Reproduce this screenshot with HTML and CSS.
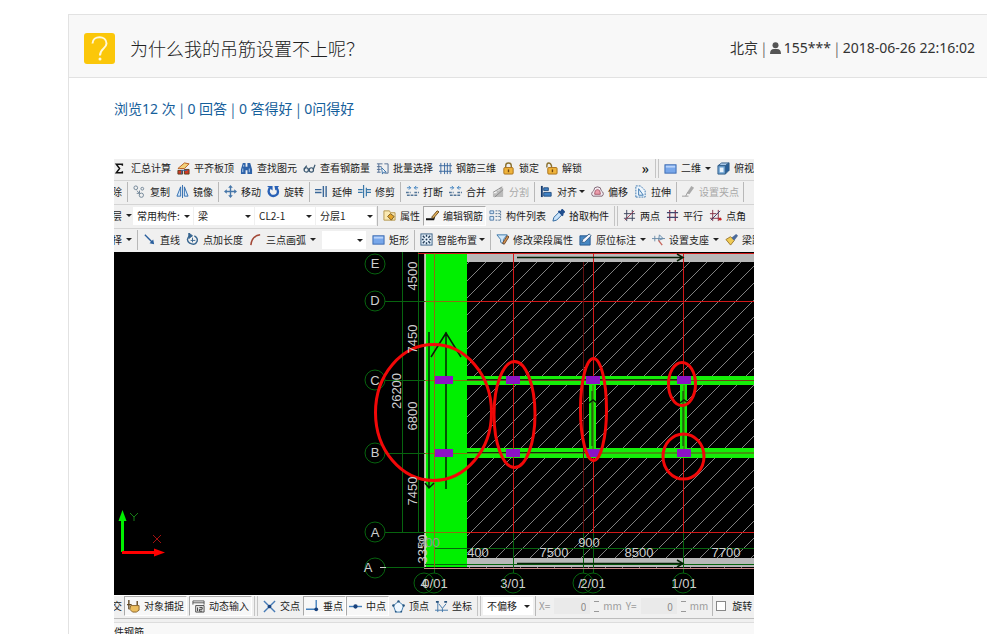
FILE: index.html
```html
<!DOCTYPE html>
<html lang="zh-CN">
<head>
<meta charset="utf-8">
<title>为什么我的吊筋设置不上呢？</title>
<link rel="stylesheet" href="styles.css">
</head>
<body>
<svg class="sprite" aria-hidden="true">
  <symbol id="sum" viewBox="0 0 14 14"><path d="M9 4V2.500H2.500L6 7l-3.500 4.500H9V10" fill="none" stroke="#111" stroke-width="1.600"/></symbol>
  <symbol id="slab" viewBox="0 0 14 14"><path d="M1 7l7-6 5 1-5 5H3z" fill="#f3d27a" stroke="#b55b1c"/><path d="M1 9h5v4H1zM8 8h5v5H8z" fill="#d33a26" stroke="#583c1c"/><path d="M5 13V9h6" fill="none" stroke="#3468a8"/></symbol>
  <symbol id="find" viewBox="0 0 14 14"><path d="M3 1h3v4h2V1h3l2 7v5H8V9H6v4H1V8z" fill="#2e62a8"/><path d="M3 7v4M10 7v4M4 3v2" stroke="#b5d4f2"/></symbol>
  <symbol id="glasses" viewBox="0 0 14 14"><g fill="none" stroke="#38566f" stroke-width="1.300"><circle cx="3.500" cy="8.500" r="2.300"/><circle cx="9" cy="8.500" r="2.300"/><path d="M1 8l3-4M11 8l2-5"/></g></symbol>
  <symbol id="batch" viewBox="0 0 14 14"><path d="M1 2h6M1 5h5M1 8h4M1 11h4M3 2v9M9 2h4v10H9" fill="none" stroke="#506c91"/><path d="M6 6l5 5-3 0-1 2z" fill="#fff" stroke="#3870a8"/></symbol>
  <symbol id="cage" viewBox="0 0 14 14"><path d="M2 1v12M6 1v12M9 1v12M12 1v12M0 4h14M0 10h14" stroke="#36669e" fill="none"/></symbol>
  <symbol id="lock" viewBox="0 0 14 14"><path d="M4 6V4q0-3 3-3t3 3v2" fill="none" stroke="#8a7130" stroke-width="1.500"/><rect x="2" y="6" width="10" height="7" rx="1" fill="#efb43c" stroke="#a66d17"/><path d="M7 8v3" stroke="#704610" stroke-width="1.500"/></symbol>
  <symbol id="unlock" viewBox="0 0 14 14"><path d="M2 6V4q0-3 2-3t3 3v2" fill="none" stroke="#8a7130" stroke-width="1.500"/><rect x="3" y="6" width="10" height="7" rx="1" fill="#efb43c" stroke="#a66d17"/><path d="M8 8v3" stroke="#704610" stroke-width="1.500"/></symbol>
  <symbol id="rect" viewBox="0 0 14 14"><rect x="1" y="3" width="12" height="9" fill="#78a7ea" stroke="#3a69b0"/><path d="M2 5h10" stroke="#b9d3fa" stroke-width="2"/></symbol>
  <symbol id="cube" viewBox="0 0 14 14"><path d="M1 4l4-3h8L9 4z" fill="#a8c8e8" stroke="#315d87"/><path d="M9 4l4-3v8l-4 4z" fill="#285e98" stroke="#315d87"/><path d="M1 4h8v9H1z" fill="#6fa4d4" stroke="#315d87"/><path d="M3 6h4v5H3z" fill="#eaf3fb"/></symbol>
  <symbol id="copy" viewBox="0 0 14 14"><g fill="none" stroke="#6d8294"><circle cx="3" cy="3" r="2"/><circle cx="10" cy="4" r="1.500"/><circle cx="9" cy="11" r="2.300"/><path d="M4 6l3 3M4 9h3V6"/></g></symbol>
  <symbol id="mirror" viewBox="0 0 14 14"><path d="M5 2v10H1zM9 2v10h4z" fill="#d5e9fb" stroke="#2f6bae"/><path d="M7 0v14" stroke="#2f6bae"/></symbol>
  <symbol id="move" viewBox="0 0 14 14"><path d="M7 2v10M2 7h10" stroke="#4777a9" stroke-width="1.500"/><path d="M7 0l2.500 3h-5zM7 14l2.500-3h-5zM0 7l3-2.500v5zM14 7l-3-2.500v5z" fill="#4777a9"/></symbol>
  <symbol id="rotate" viewBox="0 0 14 14"><path d="M3 3q-3 5 1 8 4 2 7-1 2-4-1-7" fill="none" stroke="#2860b5" stroke-width="2.500"/><path d="M0 1h6v5zM8 1h5l-4 5z" fill="#2860b5"/></symbol>
  <symbol id="extend" viewBox="0 0 14 14"><path d="M0 5h7M0 8h7" stroke="#3a6798" stroke-width="1.500"/><path d="M9 1v12M12 1v12" stroke="#3a6798" stroke-width="1.500"/></symbol>
  <symbol id="trim" viewBox="0 0 14 14"><path d="M0 5h5M0 8h5M9 5h5M9 8h5M6 0v14M9 3v9" stroke="#3978aa" stroke-width="1.300"/></symbol>
  <symbol id="break" viewBox="0 0 14 14"><path d="M0 8h5M9 8h5M1 11h12" stroke="#547698" stroke-width="1.500" stroke-dasharray="3 1"/><path d="M1 3h4M9 3h4M3 1l2 2-2 2M11 1L9 3l2 2" stroke="#397dbd" fill="none"/></symbol>
  <symbol id="split" viewBox="0 0 14 14"><path d="M1 13V9h4V6h3V3h4v10z" fill="#bbb"/><path d="M1 8l10-6M3 13l9-8" stroke="#888"/></symbol>
  <symbol id="align" viewBox="0 0 14 14"><path d="M2 1v12" stroke="#173d70" stroke-width="2"/><path d="M4 3h5v3H4zM4 8h8v4H4z" fill="#3f81c4" stroke="#234e80"/></symbol>
  <symbol id="offset" viewBox="0 0 14 14"><path d="M2 12q-3-3 1-6 0-4 4-4t4 4q4 3 1 6z" fill="#f2eaf0" stroke="#7a6270"/><path d="M4 10q0-5 3-5t3 5z" fill="#ec9bab" stroke="#a35667"/></symbol>
  <symbol id="stretch" viewBox="0 0 14 14"><path d="M2 13V1h5l5 5v7z" fill="#eef6fd" stroke="#3875ae" stroke-dasharray="2 1"/><path d="M5 4v7h5z" fill="none" stroke="#3875ae"/></symbol>
  <symbol id="grip" viewBox="0 0 14 14"><path d="M5 9l5-8 3 2-5 7z" fill="#aaa"/><path d="M0 12h7M6 8l-2 4" stroke="#999"/></symbol>
  <symbol id="props" viewBox="0 0 14 14"><path d="M1 2h6l1 2h5v8H1z" fill="#fae9b2" stroke="#b3944d"/><path d="M5 8l3-3 4 3-3 4z" fill="#e3a52b" stroke="#755721"/></symbol>
  <symbol id="editbar" viewBox="0 0 14 14"><path d="M0 11h8l1-3" fill="none" stroke="#111" stroke-width="2"/><path d="M6 9l6-7 2 1-6 7z" fill="#e4b35b" stroke="#68491e"/></symbol>
  <symbol id="list" viewBox="0 0 14 14"><path d="M1 2h4v3H1zM1 8h4v4H1z" fill="#d4e7f9" stroke="#527aa5"/><path d="M7 2h6M7 5h6M7 8h6M7 12h6M12.500 2v10" stroke="#496d93" stroke-dasharray="2 1"/></symbol>
  <symbol id="picker" viewBox="0 0 14 14"><path d="M1 13l1-4 6-6 3 3-6 6z" fill="#c9e3fa" stroke="#29639c"/><path d="M7 2l5 5M9 4l2-3 2 2-3 3" stroke="#1e4b8c" stroke-width="2" fill="#29639c"/></symbol>
  <symbol id="twopt" viewBox="0 0 14 14"><path d="M4 1v12M10 1v12M1 5h12M1 10h12" stroke="#39415a"/><path d="M2 12L12 2" stroke="#a23e54"/></symbol>
  <symbol id="parallel" viewBox="0 0 14 14"><path d="M4 1v12M10 1v12" stroke="#8e324c" stroke-width="1.300"/><path d="M1 4h12M1 9h12" stroke="#3f456d" stroke-width="1.300"/></symbol>
  <symbol id="angle" viewBox="0 0 14 14"><path d="M4 1v12M10 1v12M1 10h12M1 5h7" stroke="#843044"/><path d="M2 12L12 2" stroke="#343e66"/><circle cx="12" cy="11" r="1.500" fill="#c22"/></symbol>
  <symbol id="line" viewBox="0 0 14 14"><path d="M2 2l8 8" stroke="#285e9d" stroke-width="1.500"/><path d="M12 12l-5-1 4-4z" fill="#285e9d"/></symbol>
  <symbol id="length" viewBox="0 0 14 14"><path d="M4 3q-5 4 0 8 6 3 8-2 1-4-3-6" fill="none" stroke="#37658f" stroke-width="1.500"/><path d="M3 0l4 3-4 3zM7 5v5M5 8h5" fill="#37658f" stroke="#37658f"/></symbol>
  <symbol id="arc" viewBox="0 0 14 14"><path d="M2 13Q3 3 12 2" fill="none" stroke="#a24735" stroke-width="1.600"/></symbol>
  <symbol id="smart" viewBox="0 0 14 14"><rect x="1" y="1" width="12" height="12" fill="#e5f1fb" stroke="#375d80"/><path d="M3 3l2 2M11 3L9 5M3 11l2-2M11 11L9 9M7 2v2M7 10v2M2 7h2M10 7h2" stroke="#223b58" stroke-width="1.500"/><circle cx="7" cy="7" r="1" fill="#223b58"/></symbol>
  <symbol id="modify" viewBox="0 0 14 14"><path d="M1 2h11L8 7v5l-3-2V7z" fill="#d1e7f9" stroke="#3876a7"/><path d="M7 11l5-8 2 1-5 8z" fill="#d7944f" stroke="#6e472b"/></symbol>
  <symbol id="note" viewBox="0 0 14 14"><path d="M1 3h11v10H1z" fill="#4687c2" stroke="#285a91"/><path d="M3 10l1-3 7-6 2 2-7 7z" fill="#f8f8ff" stroke="#315d87"/></symbol>
  <symbol id="support" viewBox="0 0 14 14"><path d="M0 6h14M3 3v6M8 2l4 4-5 2z" fill="#dcecf8" stroke="#6889a6"/><path d="M7 8l4 5" stroke="#c6685f" stroke-width="1.500"/></symbol>
  <symbol id="brush" viewBox="0 0 14 14"><path d="M1 7l5-3 4 4-4 5z" fill="#f0cb55" stroke="#9b772c"/><path d="M7 5l5-4 2 2-4 5z" fill="#4c6b9b"/></symbol>
  <symbol id="snap" viewBox="0 0 14 14"><path d="M2 0v10M0 5h5M11 1v5" stroke="#634924" stroke-width="1.500"/><path d="M4 6h9v5l-3 2H6l-3-3z" fill="#ecbe5f" stroke="#87622a"/></symbol>
  <symbol id="dyn" viewBox="0 0 14 14"><path d="M1 5V1h12v4M1 3h12" fill="none" stroke="#555"/><path d="M4 6h9v7H4z" fill="#eee" stroke="#444"/><path d="M6 8v4M8 8h3v2H8v2h3" fill="none" stroke="#333"/></symbol>
  <symbol id="cross" viewBox="0 0 14 14"><path d="M1 1l12 12M13 1L1 13" stroke="#477bb6" stroke-width="1.500"/><circle cx="7" cy="7" r="2" fill="#19427d"/></symbol>
  <symbol id="perp" viewBox="0 0 14 14"><path d="M0 10h13M11 0v10" stroke="#4380bd" stroke-width="1.500"/><circle cx="11" cy="10" r="2" fill="#19427d"/></symbol>
  <symbol id="mid" viewBox="0 0 14 14"><path d="M0 7h14" stroke="#4380bd" stroke-width="1.500"/><circle cx="7" cy="7" r="2.300" fill="#19427d"/></symbol>
  <symbol id="vertex" viewBox="0 0 14 14"><path d="M7 1.500l5.500 4.500-2.500 7H4L1.500 6z" fill="#eff8ff" stroke="#3d78ab"/><g fill="#24547f"><circle cx="7" cy="1.500" r="1.300"/><circle cx="12.500" cy="6" r="1.300"/><circle cx="1.500" cy="6" r="1.300"/><circle cx="4" cy="12.500" r="1"/><circle cx="10" cy="12.500" r="1"/></g></symbol>
  <symbol id="coord" viewBox="0 0 14 14"><path d="M3 1v12M0 11h14M4 4l4 5 4-5M8 9v4" stroke="#3f75a7" fill="none"/><path d="M1 2h3M10 2h3" stroke="#27527c" stroke-width="2"/></symbol>
</svg>

<article class="question">
  <header class="question-head">
    <svg class="badge" viewBox="0 0 31 31" role="img" aria-label="提问"><rect width="31" height="31" rx="3" fill="#fbc70a"/><path d="M8.500 10.500C8.500 2 22.500 2 22.500 10.500c0 5-6.500 5-6.500 12" fill="none" stroke="#fff8dc" stroke-width="2"/><circle cx="16" cy="26" r="1.500" fill="#fff8dc"/></svg>
    <h1>为什么我的吊筋设置不上呢<span>？</span></h1>
    <p class="meta"><span>北京</span><i>|</i><svg class="user" viewBox="0 0 11 12" aria-hidden="true"><circle cx="5.500" cy="3.200" r="3" fill="#555"/><path d="M0 12q0-5 4-5h3q4 0 4 5z" fill="#555"/></svg><span>155***</span><i>|</i><time>2018-06-26 22:16:02</time></p>
  </header>
  <div class="question-body">
    <p class="stats"><a href="#views">浏览12 次</a><i>|</i><a href="#answers">0 回答</a><i>|</i><a href="#good">0 答得好</a><i>|</i><a href="#asked">0问得好</a></p>

    <section class="app">
      <div class="row row-first">
        <div class="group">
          <button><svg><use href="#sum"/></svg>汇总计算</button>
          <button><svg><use href="#slab"/></svg>平齐板顶</button>
          <button><svg><use href="#find"/></svg>查找图元</button>
          <button><svg><use href="#glasses"/></svg>查看钢筋量</button>
          <button><svg><use href="#batch"/></svg>批量选择</button>
          <button><svg><use href="#cage"/></svg>钢筋三维</button>
          <button><svg><use href="#lock"/></svg>锁定</button>
          <button><svg><use href="#unlock"/></svg>解锁</button>
        </div>
        <button class="more">»</button>
        <div class="group double">
          <button class="drop spaced"><svg><use href="#rect"/></svg>二维</button>
          <button><svg><use href="#cube"/></svg>俯视</button>
        </div>
      </div>
      <div class="row">
        <div class="group"><button class="cut"><span>除</span></button></div>
        <div class="group">
          <button><svg><use href="#copy"/></svg>复制</button>
          <button><svg><use href="#mirror"/></svg>镜像</button>
        </div>
        <div class="group">
          <button><svg><use href="#move"/></svg>移动</button>
          <button><svg><use href="#rotate"/></svg>旋转</button>
        </div>
        <div class="group">
          <button><svg><use href="#extend"/></svg>延伸</button>
          <button><svg><use href="#trim"/></svg>修剪</button>
        </div>
        <div class="group">
          <button><svg><use href="#break"/></svg>打断</button>
          <button><svg><use href="#break"/></svg>合并</button>
          <button disabled><svg><use href="#split"/></svg>分割</button>
        </div>
        <div class="group">
          <button class="drop"><svg><use href="#align"/></svg>对齐</button>
          <button><svg><use href="#offset"/></svg>偏移</button>
          <button><svg><use href="#stretch"/></svg>拉伸</button>
        </div>
        <div class="group closed">
          <button disabled><svg><use href="#grip"/></svg>设置夹点</button>
        </div>
      </div>
      <div class="row">
        <div class="combos">
          <button class="cut drop spaced"><span>层</span></button>
          <label class="combo"><select aria-label="构件分类"><option>常用构件:</option></select></label>
          <label class="combo"><select aria-label="构件类型"><option>梁</option></select></label>
          <label class="combo"><select aria-label="构件名称"><option>CL2-1</option></select></label>
          <label class="combo"><select aria-label="分层"><option>分层1</option></select></label>
        </div>
        <div class="group">
          <button><svg><use href="#props"/></svg>属性</button>
          <button class="pressed"><svg><use href="#editbar"/></svg>编辑钢筋</button>
          <button><svg><use href="#list"/></svg>构件列表</button>
          <button><svg><use href="#picker"/></svg>拾取构件</button>
        </div>
        <div class="group double">
          <button><svg><use href="#twopt"/></svg>两点</button>
          <button><svg><use href="#parallel"/></svg>平行</button>
          <button><svg><use href="#angle"/></svg>点角</button>
        </div>
      </div>
      <div class="row">
        <div class="group"><button class="cut drop spaced"><span>择</span></button></div>
        <div class="group">
          <button><svg><use href="#line"/></svg>直线</button>
          <button><svg><use href="#length"/></svg>点加长度</button>
          <button class="drop spaced"><svg><use href="#arc"/></svg>三点画弧</button>
          <label class="combo small"><select aria-label="画弧方式"><option></option></select></label>
          <button><svg><use href="#rect"/></svg>矩形</button>
        </div>
        <div class="group">
          <button class="drop"><svg><use href="#smart"/></svg>智能布置</button>
        </div>
        <div class="group">
          <button><svg><use href="#modify"/></svg>修改梁段属性</button>
          <button class="drop spaced"><svg><use href="#note"/></svg>原位标注</button>
          <button class="drop spaced"><svg><use href="#support"/></svg>设置支座</button>
          <button><svg><use href="#brush"/></svg>梁跨</button>
        </div>
      </div>

      <svg class="canvas" viewBox="114 252 640 343" role="img" aria-label="梁平面图">
        <defs>
          <pattern id="hatch" width="17" height="17" patternUnits="userSpaceOnUse"><path d="M-2 19L19 -2M-2 2L2 -2M15 19L19 15" stroke="#808080" stroke-width="1"/></pattern>
        </defs>
        <rect x="114" y="252" width="640" height="343"/>
        <rect x="467" y="253" width="287" height="315" fill="url(#hatch)"/>
        <path d="M467 253h287v9H467zM467 558h287v9H467z" fill="#b9b9b9"/>
        <path d="M425 253h42v314h-42z" fill="#00f000"/>
        <path d="M425 253v314" stroke="#f3d8d8" stroke-width="1.500"/>
        <path d="M467 376h287v9H467zM467 448h287v10H467zM589 385h7v64h-7zM680 385h7v64h-7z" fill="#15ee08"/>
        <path d="M467 380.500h287M467 453h287M593 385v64M684 385v64" stroke="#704018"/>
        <path d="M467 379.500h210M467 452.500h120M592 391v55M683 391v55" stroke="#152e0a"/>
        <g fill="none" stroke="#07640f">
          <circle cx="375" cy="264" r="10"/><circle cx="375" cy="301" r="10"/><circle cx="375" cy="380" r="10"/><circle cx="375" cy="453" r="10"/><circle cx="375" cy="532" r="10"/><circle cx="375" cy="568" r="10"/>
          <circle cx="424" cy="583" r="10"/><circle cx="434" cy="583" r="10"/><circle cx="513" cy="583" r="10"/><circle cx="583" cy="583" r="10"/><circle cx="593" cy="583" r="10"/><circle cx="683" cy="583" r="10"/>
          <path d="M402.500 252v280M418.500 252v280M385 301.500h40M385 380.500h40M385 453.500h40M385 532.500h40M385 567.500h40M434.500 563v10M513.500 532v41M583.500 532v41M593.500 532v41M683.500 532v41M434 548.500h320M425 564.500h329"/>
        </g>
        <g fill="none" stroke="#d01818">
          <path d="M418 253.500h336M467 301.500h287M467 532.500h287M513.500 253v279M593.500 253v123M593.500 458v74M683.500 253v123M683.500 458v74"/>
          <path d="M425 301.500h42M425 380.500h42M425 453.500h42M425 532.500h42M434.500 253v314" stroke="#8c6f10"/>
          <path d="M583.500 262v270" stroke="#601010"/>
          <path d="M424 568.500h330" stroke="#c98686"/>
        </g>
        <g fill="none" stroke="#062006" stroke-width="1.500">
          <path d="M429 332v156M446 332v157M431 357l15-24 15 24M425 483l4 5 5-5"/>
          <path d="M517 257.500h165M677 254l6 3.500-6 3.500M517 563.500h165M677 560l6 3.500-6 3.500M589 403l4-3 4 3M680 403l4-3 4 3"/>
        </g>
        <path d="M435 376h18v8h-18zM506 376h14v8h-14zM586 376h14v8h-14zM677 376h14v8h-14zM435 449h18v8h-18zM506 449h14v8h-14zM586 449h14v8h-14zM677 449h14v8h-14z" fill="#8c12c5"/>
        <g fill="none" stroke="#f20808" stroke-width="3">
          <ellipse cx="433.500" cy="412.500" rx="58" ry="68"/><ellipse cx="514.500" cy="414.500" rx="20.500" ry="53"/><ellipse cx="593.500" cy="409.500" rx="13" ry="51"/><ellipse cx="682" cy="384" rx="13.500" ry="21.500"/><ellipse cx="683.500" cy="456.500" rx="20.500" ry="22.500"/>
        </g>
        <g class="label">
          <text x="375" y="268">E</text><text x="375" y="305">D</text><text x="375" y="385">C</text><text x="375" y="457">B</text><text x="375" y="537">A</text><text x="368" y="572">A</text>
          <text x="478" y="557">400</text><text x="554" y="557">7500</text><text x="589" y="547">900</text><text x="639" y="557">8500</text><text x="726" y="557">7700</text>
          <text x="424" y="588">4</text><text x="435" y="588">0/01</text><text x="513" y="588">3/01</text><text x="580" y="588">/</text><text x="593" y="588">2/01</text><text x="684" y="588">1/01</text>
          <text transform="translate(417 276) rotate(-90)">4500</text>
          <text transform="translate(417 339) rotate(-90)">7450</text>
          <text transform="translate(401 391) rotate(-90)">26200</text>
          <text transform="translate(417 416) rotate(-90)">6800</text>
          <text transform="translate(417 491) rotate(-90)">7450</text>
          <text transform="translate(427 549) rotate(-90)">3350</text>
          <text class="dim" x="429" y="547">900</text>
        </g>
        <path d="M380 567.500h6" stroke="#ccc"/>
        <path d="M122.500 552v-33" stroke="#00f000" stroke-width="3"/><path d="M122.500 510l4 11h-8z" fill="#00f000"/>
        <path d="M122 552.500h34" stroke="#f00" stroke-width="3"/><path d="M165 552.500l-11 4v-8z" fill="#f00"/>
        <path d="M130 513l4 4 4-4M134 517v4" fill="none" stroke="#177d17"/><path d="M153 535l8 8M161 535l-8 8" stroke="#a01010"/>
      </svg>

      <div class="row snapbar">
        <div class="group bare">
          <button class="cut"><span>交</span></button>
          <button class="pressed"><svg><use href="#snap"/></svg>对象捕捉</button>
          <button class="pressed"><svg><use href="#dyn"/></svg>动态输入</button>
        </div>
        <div class="group double">
          <button><svg><use href="#cross"/></svg>交点</button>
          <button class="pressed"><svg><use href="#perp"/></svg>垂点</button>
          <button class="pressed"><svg><use href="#mid"/></svg>中点</button>
          <button><svg><use href="#vertex"/></svg>顶点</button>
          <button><svg><use href="#coord"/></svg>坐标</button>
        </div>
        <div class="group double tight">
          <label class="combo medium"><select aria-label="偏移方式"><option>不偏移</option></select></label>
        </div>
        <div class="group fields">
          <label>X= <input type="text" value="0" disabled></label><span class="spin"></span><span>mm</span>
          <label>Y= <input type="text" value="0" disabled></label><span class="spin"></span><span>mm</span>
        </div>
        <div class="group tight">
          <label class="check"><input type="checkbox">旋转</label>
        </div>
      </div>
      <div class="panel-title"><span>件钢筋</span></div>
    </section>
  </div>
</article>
</body>
</html>
```

FILE: styles.css
```css
* { box-sizing: border-box; }

body {
  margin: 0;
  height: 100vh;
  overflow: hidden;
  background: #fff;
  color: #333;
  font: 14px/20px "Noto Sans", "Noto Sans CJK SC", sans-serif;
}

h1, p { margin: 0; font-weight: 400; }
.sprite { display: none; }

.question {
  margin: 14px 0 0 68px;
  border-left: 1px solid #e2e2e2;
}

.question-head {
  display: flex;
  align-items: center;
  height: 64px;
  padding: 4px 12px 0 15px;
  background: #f8f8f8;
  border-top: 1px solid #e2e2e2;
  border-bottom: 1px solid #e2e2e2;
}

.badge { width: 31px; height: 31px; }

h1 {
  flex: 1;
  margin-left: 15px;
  color: #222;
  font-family: "Noto Sans CJK SC", sans-serif;
  font-size: 18px;
  line-height: 24px;
  font-weight: 300;
}
h1 span { font-family: "Noto Sans CJK TC", sans-serif; }

.meta { display: flex; align-items: center; white-space: nowrap; }
.meta i, .stats i {
  margin: 0 4px;
  font-family: "Noto Sans CJK SC", sans-serif;
  font-style: normal;
}
.meta i { color: #666; }
.user { width: 11px; height: 12px; margin-right: 3px; }

.question-body { padding: 21px 0 0 45px; }
.stats { display: flex; color: #1a6496; white-space: nowrap; }
.stats a { color: #16609b; text-decoration: none; }

.app {
  max-width: 640px;
  margin-top: 40px;
  overflow: hidden;
  background: #f0f0f0;
  color: #1c1c1c;
  font: 10px/14px "Noto Sans CJK SC", sans-serif;
}

.row {
  display: flex;
  align-items: center;
  height: 24px;
  padding-bottom: 2px;
  border-top: 1px solid #d4d4d4;
  white-space: nowrap;
  overflow: hidden;
}

.row-first { height: 21px; padding-bottom: 3px; border-top: 0; }

.group {
  display: flex;
  flex: none;
  align-items: center;
  gap: 6px;
  height: 20px;
  padding: 0 5px;
  border-left: 1px solid #b8b8b8;
}

.group:first-child { padding-left: 0; border-left: 0; }
.double { border-left: 4px double #c4c4c4; }
.tight { gap: 2px; padding: 0 2px; }
.closed { border-right: 1px solid #b8b8b8; padding-right: 4px; }
.bare { gap: 2px; padding-right: 2px; }
.row-first .double { padding-right: 0; }

button {
  display: flex;
  align-items: center;
  gap: 4px;
  margin: 0;
  padding: 0;
  border: 0;
  background: none;
  color: inherit;
  font: inherit;
}

button:disabled { color: #a8a8a8; }
button svg { width: 13px; height: 13px; }

.pressed {
  height: 20px;
  margin: 0 -3px;
  padding: 0 2px;
  border: 1px solid #a9a9a9;
  border-right-color: #fff;
  border-bottom-color: #fff;
  background: #f7f7f7;
}
.bare .pressed { margin: 0; }

.cut span {
  display: flex;
  justify-content: flex-end;
  width: 8px;
  overflow: hidden;
}

.drop::after {
  content: "";
  margin-left: -2px;
  border: 3px solid transparent;
  border-top-color: #222;
  border-bottom: 0;
}
.spaced::after { margin-left: 0; }

.more { margin-left: auto; font-size: 14px; font-weight: 700; padding: 0 6px; }

.combos { display: flex; gap: 1px; padding-right: 1px; }

.combo {
  position: relative;
  width: 60px;
  height: 18px;
  background: #fff;
}
.combo.small { width: 44px; }
.combo.medium { width: 50px; }
.combo::after {
  content: "";
  position: absolute;
  top: 8px;
  right: 3px;
  border: 3px solid transparent;
  border-top-color: #222;
  border-bottom: 0;
  pointer-events: none;
}

select {
  appearance: none;
  width: 100%;
  height: 100%;
  padding: 0 10px 0 4px;
  border: 0;
  background: none;
  color: inherit;
  font: inherit;
}

.canvas { display: block; width: 100%; }
.label {
  fill: #cfcfcf;
  font: 13px "Liberation Sans", sans-serif;
  text-anchor: middle;
}
.dim { fill: #999; }

.snapbar { border-top-color: #fff; border-bottom: 1px solid #bdbdbd; }

.fields { gap: 4px; padding: 0 4px 0 3px; color: #9c9c9c; }
.fields label { display: flex; align-items: center; gap: 4px; }
.fields input {
  width: 36px;
  height: 16px;
  padding: 0 4px;
  border: 0;
  background: #eaeaea;
  color: #8a8a8a;
  font: inherit;
  text-align: right;
}
.spin { width: 5px; height: 11px; border: solid #999; border-width: 1px 0; }

.check { display: flex; align-items: center; gap: 6px; }
.check input {
  appearance: none;
  width: 10px;
  height: 10px;
  margin: 0 0 0 1px;
  border: 1px solid #888;
  background: #fff;
}

.panel-title {
  height: 24px;
  margin-top: 3px;
  padding-top: 2px;
  border-top: 1px solid #ddd;
  background: #f8f8f8;
}
```
